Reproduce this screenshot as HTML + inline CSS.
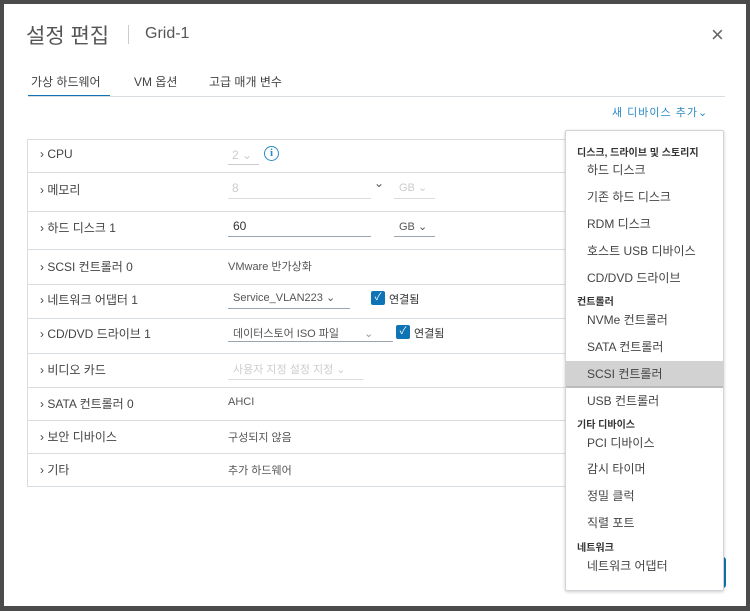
<!DOCTYPE html>
<html><head><meta charset="utf-8"><style>
*{margin:0;padding:0;box-sizing:border-box}
body{width:750px;height:611px;background:#4b4b4b;font-family:"Liberation Sans","Noto Sans CJK KR",sans-serif;position:relative;overflow:hidden;color:#444}
.dlg{position:absolute;left:4px;top:4px;width:742px;height:602px;background:#fff}
.a{position:absolute;white-space:nowrap}
.row{position:absolute;left:27px;width:697px;border-top:1px solid #d8dde2}
.lbl{position:absolute;left:40px;font-size:12px;color:#444}
.val{position:absolute;left:228px;font-size:11px;color:#555}
.ul{position:absolute;height:1px;background:#9aa5ad}
.cb{position:absolute;width:14px;height:14px;background:#0f74b6;border-radius:2px;color:#fff;font-size:10px;line-height:14px;text-align:center}
.menu{position:absolute;left:565px;top:130px;width:159px;height:461px;background:#fff;border:1px solid #d0d4d8;border-radius:2px;box-shadow:0 1px 3px rgba(0,0,0,.2)}
.h{position:absolute;left:11px;font-size:10px;font-weight:bold;color:#333}
.it{position:absolute;left:21px;font-size:12px;color:#444}
</style></head><body>
<div class="dlg"></div>
<div class="a" style="left:26px;top:20px;font-size:21px;color:#555">설정 편집</div>
<div class="a" style="left:128px;top:25px;width:1px;height:19px;background:#ccc"></div>
<div class="a" style="left:145px;top:25px;font-size:16px;color:#555">Grid-1</div>
<div class="a" style="left:711px;top:22px;font-size:22px;color:#666;font-weight:300">×</div>
<div class="a" style="left:31px;top:73px;font-size:12px;color:#444">가상 하드웨어</div>
<div class="a" style="left:134px;top:73px;font-size:12px;color:#444">VM 옵션</div>
<div class="a" style="left:209px;top:73px;font-size:12px;color:#444">고급 매개 변수</div>
<div class="a" style="left:28px;top:95px;width:82px;height:2px;background:#0f74b6"></div>
<div class="a" style="left:28px;top:96px;width:697px;height:1px;background:#d8dde2"></div>
<div class="a" style="left:612px;top:104px;font-size:11px;color:#2a8ac4;letter-spacing:1px">새 디바이스 추가⌄</div>

<div class="a" style="left:27px;top:139px;width:1px;height:348px;background:#d8dde2"></div>
<div class="row" style="top:139px"></div>
<div class="row" style="top:172px"></div>
<div class="row" style="top:211px"></div>
<div class="row" style="top:249px"></div>
<div class="row" style="top:284px"></div>
<div class="row" style="top:318px"></div>
<div class="row" style="top:353px"></div>
<div class="row" style="top:387px"></div>
<div class="row" style="top:420px"></div>
<div class="row" style="top:453px"></div>
<div class="row" style="top:486px"></div>

<div class="lbl" style="top:147px">›&nbsp;CPU</div>
<div class="lbl" style="top:181px">›&nbsp;메모리</div>
<div class="lbl" style="top:219px">›&nbsp;하드 디스크 1</div>
<div class="lbl" style="top:258px">›&nbsp;SCSI 컨트롤러 0</div>
<div class="lbl" style="top:291px">›&nbsp;네트워크 어댑터 1</div>
<div class="lbl" style="top:325px">›&nbsp;CD/DVD 드라이브 1</div>
<div class="lbl" style="top:361px">›&nbsp;비디오 카드</div>
<div class="lbl" style="top:395px">›&nbsp;SATA 컨트롤러 0</div>
<div class="lbl" style="top:428px">›&nbsp;보안 디바이스</div>
<div class="lbl" style="top:461px">›&nbsp;기타</div>

<div class="val" style="top:148px;left:232px;color:#ccc;font-size:12px">2 ⌄</div>
<div class="ul" style="left:228px;top:164px;width:31px;background:#ccc"></div>
<div class="a" style="left:264px;top:146px;width:15px;height:15px;border:1.5px solid #2a8ac4;border-radius:50%;color:#2a8ac4;font-size:11px;font-weight:bold;font-family:'Liberation Serif',serif;text-align:center;line-height:13px">i</div>
<div class="val" style="top:181px;left:232px;color:#ccc;font-size:12px">8</div>
<div class="ul" style="left:228px;top:198px;width:143px;background:#ddd"></div>
<div class="val" style="top:176px;left:374px;color:#555;font-size:12px">⌄</div>
<div class="val" style="top:181px;left:399px;color:#ccc">GB ⌄</div>
<div class="ul" style="left:394px;top:198px;width:41px;background:#ddd"></div>
<div class="val" style="top:219px;left:233px;color:#333;font-size:12px">60</div>
<div class="ul" style="left:228px;top:236px;width:143px"></div>
<div class="val" style="top:220px;left:399px">GB ⌄</div>
<div class="ul" style="left:394px;top:236px;width:41px"></div>
<div class="val" style="top:258px">VMware 반가상화</div>
<div class="val" style="top:291px;left:233px">Service_VLAN223 ⌄</div>
<div class="ul" style="left:228px;top:308px;width:122px"></div>
<div class="cb" style="left:371px;top:291px">✓</div>
<div class="val" style="top:291px;left:389px;color:#333">연결됨</div>
<div class="val" style="top:325px;left:233px">데이터스토어 ISO 파일 <span style="margin-left:22px;color:#999">⌄</span></div>
<div class="ul" style="left:228px;top:341px;width:165px"></div>
<div class="cb" style="left:396px;top:325px">✓</div>
<div class="val" style="top:325px;left:414px;color:#333">연결됨</div>
<div class="val" style="top:361px;left:233px;color:#ccc">사용자 지정 설정 지정 ⌄</div>
<div class="ul" style="left:228px;top:379px;width:135px;background:#ddd"></div>
<div class="val" style="top:396px">AHCI</div>
<div class="val" style="top:429px">구성되지 않음</div>
<div class="val" style="top:462px">추가 하드웨어</div>

<div class="a" style="left:718px;top:557px;width:8px;height:31px;background:#0f74b6;border-radius:3px"></div>
<div class="menu">
<div class="h" style="top:13px">디스크, 드라이브 및 스토리지</div>
<div class="it" style="top:30px">하드 디스크</div>
<div class="it" style="top:57px">기존 하드 디스크</div>
<div class="it" style="top:84px">RDM 디스크</div>
<div class="it" style="top:111px">호스트 USB 디바이스</div>
<div class="it" style="top:138px">CD/DVD 드라이브</div>
<div class="h" style="top:162px">컨트롤러</div>
<div class="it" style="top:180px">NVMe 컨트롤러</div>
<div class="it" style="top:207px">SATA 컨트롤러</div>
<div style="position:absolute;left:0;top:230px;width:157px;height:27px;background:#d2d2d2;border-bottom:2px solid #bbb"></div>
<div class="it" style="top:234px">SCSI 컨트롤러</div>
<div class="it" style="top:261px">USB 컨트롤러</div>
<div class="h" style="top:285px">기타 디바이스</div>
<div class="it" style="top:303px">PCI 디바이스</div>
<div class="it" style="top:329px">감시 타이머</div>
<div class="it" style="top:356px">정밀 클럭</div>
<div class="it" style="top:383px">직렬 포트</div>
<div class="h" style="top:408px">네트워크</div>
<div class="it" style="top:426px">네트워크 어댑터</div>
</div>
</body></html>
